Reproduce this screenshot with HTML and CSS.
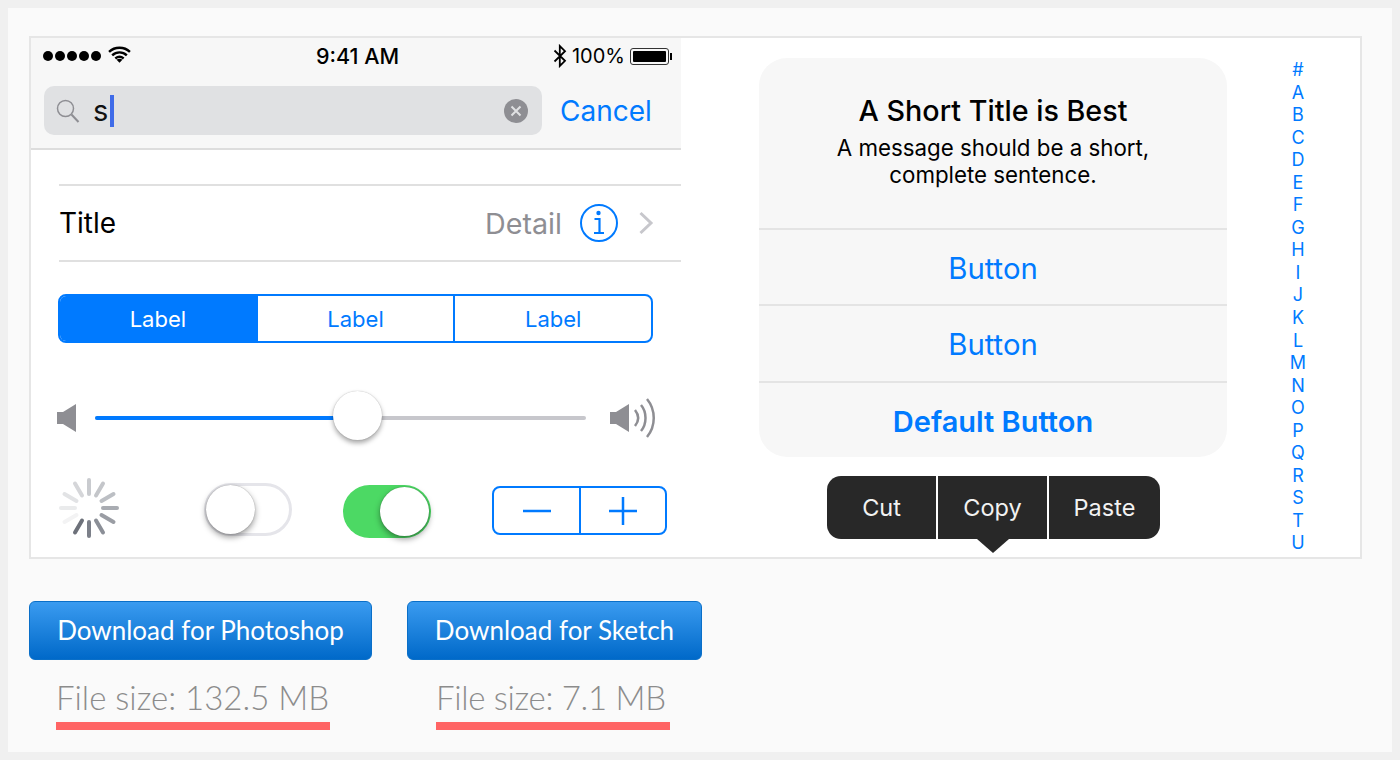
FILE: index.html
```html
<!DOCTYPE html>
<html lang="en">
<head>
    <meta charset="UTF-8">
    <title>iOS UI Kit</title>
    <link rel="stylesheet" href="styles.css">
</head>
<body>
    <div class="page">
        <div class="frame">
            <div class="ios">
                <div class="nav">
                    <div class="status">
                        <div class="status-left">
                            <span class="dots"><i></i><i></i><i></i><i></i><i></i></span>
                            <svg class="wifi" width="23" height="17" viewBox="0 0 22 16"><path d="M1 5.500C6.500.2 15.500.2 21 5.500M4 8.800C8 5 14 5 18 8.800M7 11.800C9.400 9.800 12.600 9.800 15 11.800" fill="none" stroke="#000" stroke-width="2.300"/><path d="M11 16l-2.800-3c1.600-1.200 4-1.200 5.600 0z" fill="#000"/></svg>
                        </div>
                        <div class="time">9:41 AM</div>
                        <div class="status-right">
                            <svg width="14" height="24" viewBox="0 0 14 24"><path d="M1.500 6.500L12 16.800 6.800 22V2L12 7.200 1.500 17.500" fill="none" stroke="#000" stroke-width="1.800"/></svg>
                            <span class="battery-text">100%</span>
                            <span class="battery"><b></b></span>
                        </div>
                    </div>
                    <div class="search-row">
                        <div class="search">
                            <svg width="26" height="26" viewBox="0 0 26 26"><circle cx="10.500" cy="10.500" r="8" fill="none" stroke="#8e8e93" stroke-width="1.500"/><path d="M16.500 16.500L23.500 24" stroke="#8e8e93" stroke-width="2"/></svg>
                            <span class="search-text">s</span>
                            <span class="caret"></span>
                            <svg class="clear" width="24" height="24" viewBox="0 0 24 24"><circle cx="12" cy="12" r="12" fill="#8e8e93"/><path d="M7.500 7.500l9 9M16.500 7.500l-9 9" stroke="#e0e1e3" stroke-width="2"/></svg>
                        </div>
                        <span class="cancel">Cancel</span>
                    </div>
                </div>

                <div class="row">
                    <span class="row-title">Title</span>
                    <span class="row-detail">Detail</span>
                    <svg class="info" width="38" height="38" viewBox="0 0 38 38"><circle cx="19" cy="19" r="18" fill="none" stroke="#007aff" stroke-width="2"/><circle cx="18.500" cy="9" r="2.200" fill="#007aff"/><path d="M14.500 15H19.500V29M14 29H24" fill="none" stroke="#007aff" stroke-width="2.200"/></svg>
                    <svg class="chevron" width="16" height="24" viewBox="0 0 16 24"><path d="M2.500 2L13 12 2.500 22" fill="none" stroke="#c7c7cc" stroke-width="3"/></svg>
                </div>

                <div class="segmented">
                    <div class="seg seg-on">Label</div>
                    <div class="seg">Label</div>
                    <div class="seg">Label</div>
                </div>

                <div class="slider-row">
                    <svg class="vol-low" width="19" height="28" viewBox="0 0 19 28"><path d="M0 8H6L19 0V28L6 20H0z" fill="#8e8e93"/></svg>
                    <div class="track">
                        <div class="track-fill"></div>
                        <div class="thumb"></div>
                    </div>
                    <svg class="vol-high" width="46" height="40" viewBox="0 0 46 40"><path d="M0 14H6L19 6V34L6 26H0z" fill="#8e8e93"/><path d="M25 12C29 17 29 23 25 28M31 7C37 14 37 26 31 33M37 1C46 12 46 28 37 39" fill="none" stroke="#8e8e93" stroke-width="2.500"/></svg>
                </div>

                <div class="controls">
                    <svg class="spinner" width="62" height="62" viewBox="0 0 62 62">
                        <g stroke-width="4" stroke-linecap="round" fill="none">
                            <path d="M31 3V17" stroke="#c9cbcf"/>
                            <path d="M45 6.500L38 18.500" stroke="#c4c6ca"/>
                            <path d="M55.500 17L43.500 24" stroke="#bcbfc4"/>
                            <path d="M59 31H45" stroke="#a9acb2"/>
                            <path d="M55.500 45L43.500 38" stroke="#9a9da4"/>
                            <path d="M45 55.500L38 43.500" stroke="#8b8f97"/>
                            <path d="M31 59V45" stroke="#7c8089"/>
                            <path d="M17 55.500L24 43.500" stroke="#6d717a"/>
                            <path d="M6.500 45L18.500 38" stroke="#f3f3f4"/>
                            <path d="M3 31H17" stroke="#eaebec"/>
                            <path d="M6.500 17L18.500 24" stroke="#e2e3e5"/>
                            <path d="M17 6.500L24 18.500" stroke="#d5d6d9"/>
                        </g>
                    </svg>
                    <div class="switch switch-off"><span class="knob"></span></div>
                    <div class="switch switch-on"><span class="knob"></span></div>
                    <div class="stepper">
                        <div class="step step-minus"><svg width="30" height="30" viewBox="0 0 30 30"><path d="M1 15H29" stroke="#007aff" stroke-width="2.500"/></svg></div>
                        <div class="step"><svg width="30" height="30" viewBox="0 0 30 30"><path d="M1 15H29M15 1V29" stroke="#007aff" stroke-width="2.500"/></svg></div>
                    </div>
                </div>
            </div>

            <div class="side">
                <div class="side-main">
                    <div class="alert">
                        <div class="alert-head">
                            <h2>A Short Title is Best</h2>
                            <p>A message should be a short,<br>complete sentence.</p>
                        </div>
                        <div class="alert-btn">Button</div>
                        <div class="alert-btn">Button</div>
                        <div class="alert-btn alert-default">Default Button</div>
                    </div>
                    <div class="menu">
                        <span class="menu-item menu-cut">Cut</span>
                        <span class="menu-item menu-copy">Copy</span>
                        <span class="menu-item menu-paste">Paste</span>
                    </div>
                </div>
                <div class="index">
                    <span>#</span><span>A</span><span>B</span><span>C</span><span>D</span><span>E</span><span>F</span><span>G</span><span>H</span><span>I</span><span>J</span><span>K</span><span>L</span><span>M</span><span>N</span><span>O</span><span>P</span><span>Q</span><span>R</span><span>S</span><span>T</span><span>U</span>
                </div>
            </div>
        </div>

        <div class="downloads">
            <div class="download download-ps">
                <a class="dl-btn" href="#">Download for Photoshop</a>
                <div class="dl-size">File size: 132.5 MB</div>
            </div>
            <div class="download download-sk">
                <a class="dl-btn" href="#">Download for Sketch</a>
                <div class="dl-size">File size: 7.1 MB</div>
            </div>
        </div>
    </div>
</body>
</html>
```

FILE: styles.css
```css
* {
    box-sizing: border-box;
}
body {
    margin: 0;
    background-color: #f0f0f0;
    font-family: Inter, "Liberation Sans", sans-serif;
    overflow: hidden;
}
.page {
    margin: 8px;
    height: 744px;
    padding: 28px 0 0 21px;
    background-color: #fafafa;
}
.frame {
    display: flex;
    width: 1333px;
    height: 523px;
    border: 2px solid #e6e6e6;
    background-color: #fff;
}

/* left column */
.ios {
    width: 650px;
    flex-shrink: 0;
}
.nav {
    background-color: #f7f7f7;
    border-bottom: 2px solid #ddd;
}
.status {
    display: grid;
    grid-template-columns: 1fr auto 1fr;
    align-items: center;
    height: 32px;
    padding: 4px 9px 0 12px;
}
.status-left {
    display: flex;
    align-items: center;
    gap: 7px;
}
.dots {
    display: flex;
    gap: 2px;
}
.dots i {
    width: 10px;
    height: 10px;
    border-radius: 50%;
    background-color: #000;
}
.wifi {
    margin-top: -4px;
}
.time {
    font-size: 21.500px;
    font-weight: 500;
    color: #000;
}
.status-right {
    display: flex;
    align-items: center;
    justify-content: flex-end;
    gap: 5px;
}
.battery-text {
    font-size: 20px;
    color: #000;
}
.battery {
    position: relative;
    display: block;
    width: 39px;
    height: 17px;
    padding: 2px;
    border: 1px solid #333;
    border-radius: 3px;
    margin-right: 3px;
}
.battery b {
    display: block;
    height: 100%;
    background-color: #000;
    border-radius: 1px;
}
.battery::after {
    content: "";
    position: absolute;
    right: -4px;
    top: 4px;
    width: 2px;
    height: 7px;
    background-color: #000;
}
.search-row {
    display: flex;
    align-items: center;
    height: 78px;
    padding: 16px 0 13px 13px;
}
.search {
    display: flex;
    align-items: center;
    width: 498px;
    height: 49px;
    padding: 0 14px 0 11px;
    border-radius: 10px;
    background-color: #e0e1e3;
}
.search-text {
    margin-left: 12px;
    font-size: 29px;
    color: #111;
}
.caret {
    width: 4px;
    height: 32px;
    margin-left: 2px;
    background-color: #3f6be8;
}
.clear {
    margin-left: auto;
}
.cancel {
    margin-left: 18px;
    font-size: 28px;
    color: #007aff;
}
.row {
    display: flex;
    align-items: center;
    height: 78px;
    margin: 34px 0 0 28px;
    border-top: 2px solid #e0e0e0;
    border-bottom: 2px solid #e0e0e0;
    padding-right: 27px;
}
.row-title {
    font-size: 28px;
    color: #000;
}
.row-detail {
    margin-left: auto;
    font-size: 28.700px;
    color: #8e8e93;
}
.info {
    margin-left: 18px;
}
.chevron {
    margin-left: 20px;
}
.segmented {
    display: flex;
    width: 595px;
    height: 49px;
    margin: 32px 0 0 27px;
    border: 2px solid #007aff;
    border-radius: 8px;
    overflow: hidden;
}
.seg {
    flex: 1;
    line-height: 47px;
    text-align: center;
    font-size: 22px;
    color: #007aff;
    border-left: 2px solid #007aff;
}
.seg-on {
    background-color: #007aff;
    color: #fff;
    border-left: 0;
}
.slider-row {
    display: flex;
    align-items: center;
    height: 49px;
    margin-top: 50px;
    padding-left: 26px;
}
.track {
    position: relative;
    width: 491px;
    height: 4px;
    margin: 0 24px 0 19px;
    border-radius: 2px;
    background-color: #c7c7cc;
}
.track-fill {
    width: 240px;
    height: 100%;
    border-radius: 2px;
    background-color: #007aff;
}
.thumb {
    position: absolute;
    left: 238px;
    top: -25px;
    width: 49px;
    height: 49px;
    border-radius: 50%;
    background-color: #fff;
    box-shadow: 0 3px 5px rgba(0, 0, 0, 0.35), 0 0 1px rgba(0, 0, 0, 0.3);
}
.controls {
    display: flex;
    align-items: center;
    height: 53px;
    margin-top: 41px;
    padding-left: 27px;
}
.spinner {
    flex-shrink: 0;
    margin-bottom: 3px;
}
.switch {
    position: relative;
    width: 88px;
    height: 53px;
    border-radius: 27px;
}
.switch-off {
    margin-left: 84px;
    border: 3px solid #e5e5ea;
    background-color: #fff;
}
.switch-on {
    margin-left: 51px;
    margin-top: 4px;
    background-color: #4cd964;
}
.knob {
    position: absolute;
    width: 49px;
    height: 49px;
    border-radius: 50%;
    background-color: #fff;
    box-shadow: 0 3px 6px rgba(0, 0, 0, 0.4), 0 0 1px rgba(0, 0, 0, 0.4);
}
.switch-off .knob {
    left: -1px;
    top: -1px;
}
.switch-on .knob {
    right: 2px;
    top: 2px;
}
.stepper {
    display: flex;
    width: 175px;
    height: 49px;
    margin-left: 61px;
    margin-top: 2px;
    border: 2px solid #007aff;
    border-radius: 8px;
}
.step {
    flex: 1;
    display: flex;
    align-items: center;
    justify-content: center;
}
.step-minus {
    flex: 0 0 85px;
}
.step + .step {
    border-left: 2px solid #007aff;
}

/* right column */
.side {
    display: flex;
    padding: 20px 0 0 78px;
}
.side-main {
    width: 468px;
}
.alert {
    height: 399px;
    border-radius: 28px;
    background-color: #f7f7f7;
    overflow: hidden;
}
.alert-head {
    height: 170px;
    padding-top: 35px;
    text-align: center;
    color: #000;
}
.alert-head h2 {
    margin: 0;
    font-size: 28.700px;
    font-weight: 500;
    line-height: 36px;
}
.alert-head p {
    margin: 5px 0 0;
    font-size: 22.300px;
    line-height: 27px;
}
.alert-btn {
    height: 76.400px;
    border-top: 2px solid #e4e4e4;
    line-height: 78px;
    text-align: center;
    font-size: 29.300px;
    color: #007aff;
}
.alert-default {
    font-size: 29px;
    font-weight: 600;
    line-height: 77px;
}
.menu {
    position: relative;
    display: flex;
    width: 333px;
    height: 63px;
    margin: 19px 0 0 68px;
    border-radius: 14px;
    background-color: #282828;
}
.menu::after {
    content: "";
    position: absolute;
    left: 150px;
    top: 63px;
    border-top: 14px solid #282828;
    border-left: 16px solid transparent;
    border-right: 16px solid transparent;
}
.menu-item {
    line-height: 64px;
    text-align: center;
    font-size: 23.500px;
    color: #f2f2f2;
}
.menu-cut {
    width: 109px;
}
.menu-copy {
    width: 113px;
    border-left: 2px solid #fff;
    border-right: 2px solid #fff;
}
.menu-paste {
    flex: 1;
}
.index {
    display: flex;
    flex-direction: column;
    width: 40px;
    margin-left: 51px;
    padding-top: 1px;
    text-align: center;
    font-size: 18px;
    line-height: 22.550px;
    color: #007aff;
}

/* download buttons */
.downloads {
    display: flex;
    margin-top: 42px;
    font-family: Lato, sans-serif;
}
.download-ps {
    width: 343px;
}
.download-sk {
    width: 295px;
    margin-left: 35px;
}
.dl-btn {
    display: block;
    height: 59px;
    border: 1px solid #0a6fc8;
    border-radius: 6px;
    background: linear-gradient(#3a9bf0, #0069c9);
    line-height: 57px;
    text-align: center;
    font-size: 26px;
    color: #fff;
    text-decoration: none;
}
.dl-size {
    height: 70px;
    margin-left: 27px;
    padding-top: 14px;
    border-bottom: 8px solid #ff6464;
    font-size: 33px;
    font-weight: 300;
    line-height: 46px;
    color: #8c8c8c;
    white-space: nowrap;
}
.download-ps .dl-size {
    width: 274px;
}
.download-sk .dl-size {
    width: 234px;
    margin-left: 29px;
    letter-spacing: -0.300px;
}
```
